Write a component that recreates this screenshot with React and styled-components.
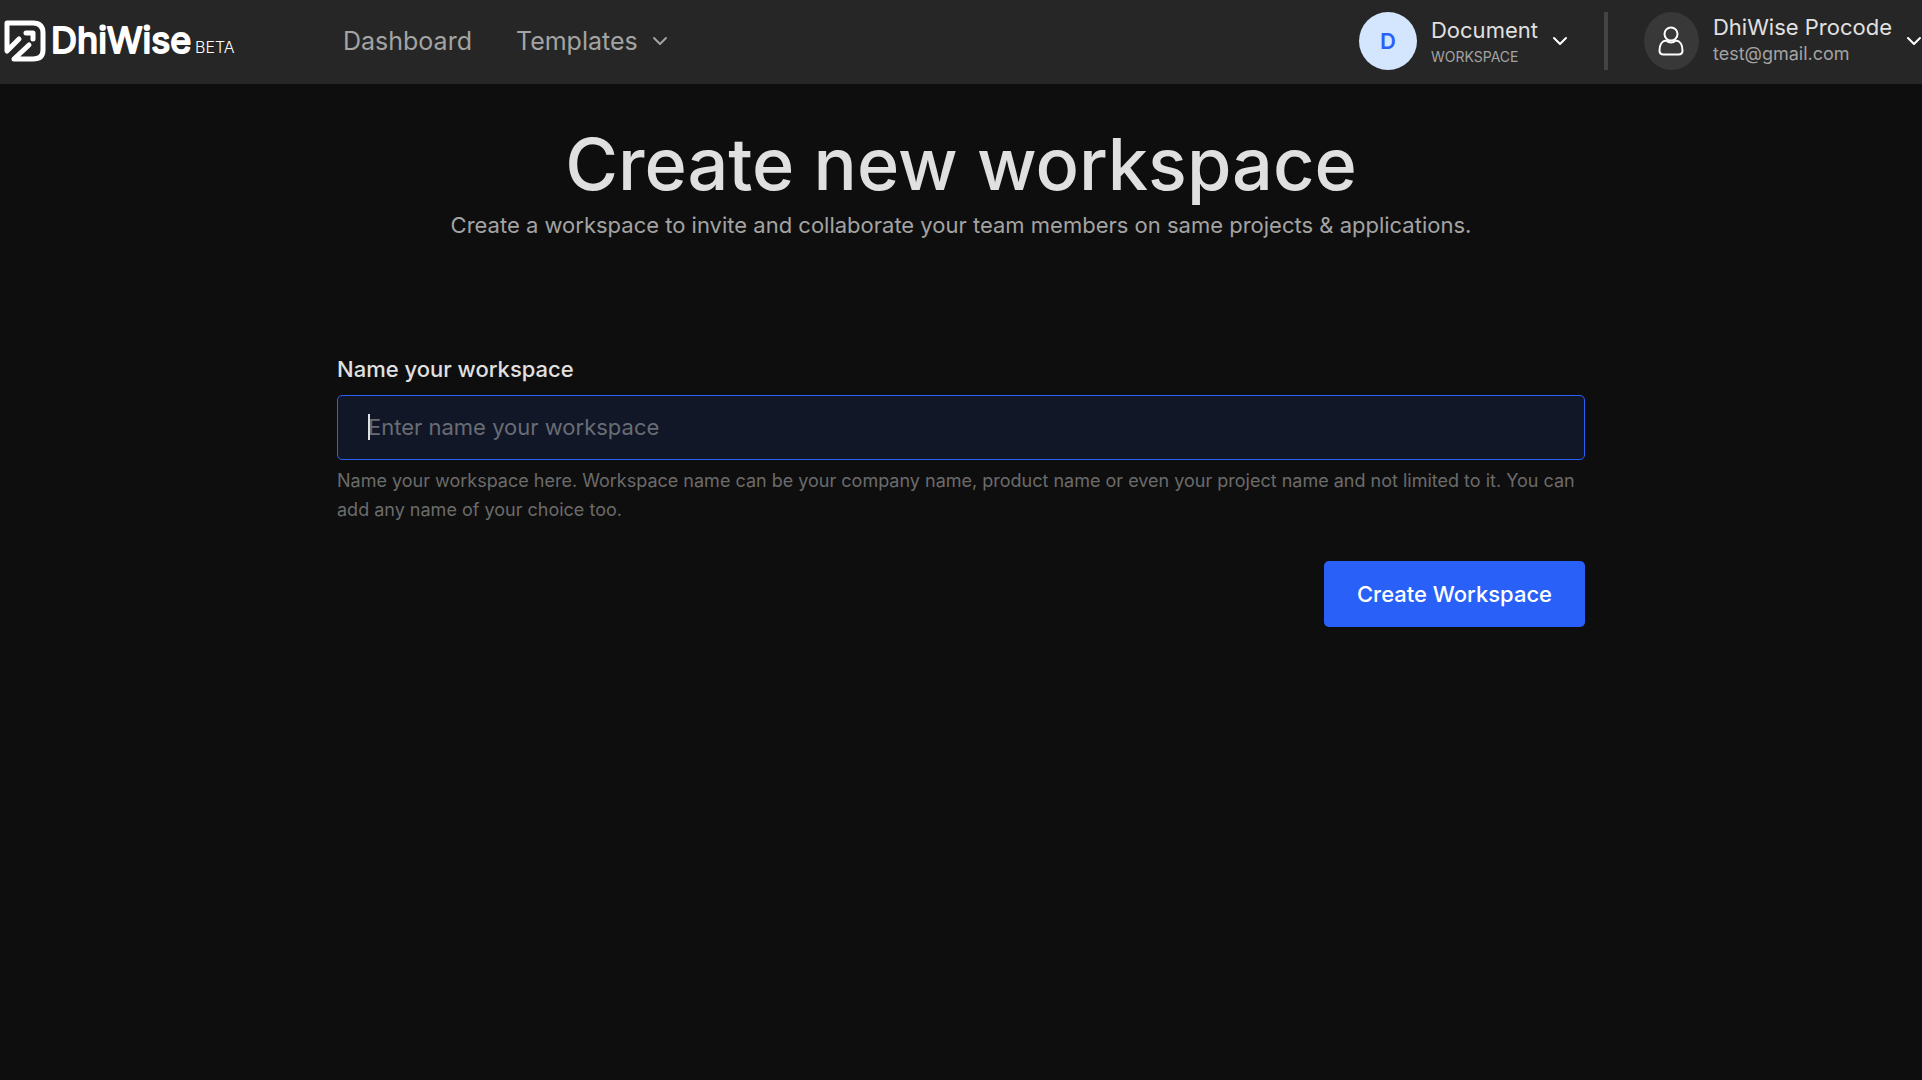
import React from "react";
import styled, { createGlobalStyle, css } from "styled-components";

const GlobalStyle = createGlobalStyle`
  *, *::before, *::after { box-sizing: border-box; }
  body {
    margin: 0;
    background: #0e0e0e;
    color: #e0e0e0;
    font-family: Inter, "Liberation Sans", sans-serif;
  }
  h1, p { margin: 0; }
  button, input { font: inherit; }
`;

const Header = styled.header`
  display: flex;
  align-items: center;
  padding: 12px 0 14px 4px;
  background: #262626;
`;

const Brand = styled.a`
  display: flex;
  flex: none;
  width: 339px;
`;

const Nav = styled.nav`
  display: flex;
  align-items: center;
  gap: 44px;
  flex: 1;
`;

const navItem = css`
  color: #a3a3a3;
  font-size: 25px;
  line-height: 32px;
`;

const NavLink = styled.a`
  ${navItem}
  text-decoration: none;
`;

const PlainButton = styled.button`
  display: flex;
  align-items: center;
  padding: 0;
  border: 0;
  background: none;
  color: #fff;
  text-align: left;
  cursor: pointer;
`;

const NavButton = styled(PlainButton)`
  ${navItem}
  gap: 14px;
`;

const Switcher = styled(PlainButton)`
  gap: 14px;
`;

const Avatar = styled.span`
  display: flex;
  align-items: center;
  justify-content: center;
  flex: none;
  width: ${(p) => p.$width}px;
  height: 58px;
  border-radius: 50%;
  background: ${(p) => p.$background};
  color: #2960f8;
  font-size: 22px;
  font-weight: 600;
`;

const Lines = styled.span`
  display: flex;
  flex-direction: column;
  padding: ${(p) => p.$padding};
`;

const Title = styled.span`
  color: #e0e0e0;
  font-size: 22px;
  line-height: 28px;
`;

const Caption = styled.span`
  color: #a3a3a3;
  font-size: ${(p) => p.$size}px;
  line-height: 26px;
`;

const Divider = styled.span`
  flex: none;
  width: 4px;
  height: 58px;
  margin: 0 36px;
  background: #444;
`;

const Main = styled.main`
  width: 100%;
  max-width: 1248px;
  margin: 0 auto;
  padding-top: 36px;
`;

const Heading = styled.h1`
  color: #e0e0e0;
  font-size: 72px;
  font-weight: 500;
  line-height: 88px;
  text-align: center;
`;

const Lead = styled.p`
  color: #a3a3a3;
  font-size: 22px;
  line-height: 34px;
  text-align: center;
`;

const Form = styled.form`
  display: flex;
  flex-direction: column;
  margin-top: 110px;
`;

const Label = styled.label`
  font-size: 22px;
  font-weight: 500;
  line-height: 34px;
`;

const Field = styled.div`
  position: relative;
  margin-top: 9px;
  font-size: 22px;
`;

const Input = styled.input`
  display: block;
  width: 100%;
  height: 65px;
  padding: 0 30px 2px;
  border: 1px solid #2960f8;
  border-radius: 5px;
  outline: 0;
  background: #111726;
  color: #e0e0e0;
  caret-color: transparent;
  &::placeholder { color: #686c75; opacity: 1; }
`;

const Caret = styled.span`
  position: absolute;
  top: 19px;
  left: 31px;
  width: 2px;
  height: 26px;
  background: #e0e0e0;
`;

const Hint = styled.p`
  margin-top: 6px;
  color: #6b6b6b;
  font-size: 18px;
  line-height: 29px;
`;

const Submit = styled.button`
  align-self: flex-end;
  height: 66px;
  margin-top: 37px;
  padding: 0 33px;
  border: 0;
  border-radius: 5px;
  background: #2960f8;
  color: #fff;
  font-size: 22px;
  font-weight: 500;
  cursor: pointer;
`;

function Chevron() {
  return (
    <svg width="16" height="10" viewBox="0 0 16 10" fill="none" stroke="currentColor" strokeWidth="2" strokeLinecap="round" strokeLinejoin="round" aria-hidden="true">
      <path d="M2 2l6 6 6-6" />
    </svg>
  );
}

function UserIcon() {
  return (
    <svg width="26" height="30" viewBox="0 0 26 30" fill="none" stroke="#fff" strokeWidth="2" strokeLinejoin="round" aria-hidden="true">
      <circle cx="13" cy="8" r="6.5" />
      <path d="M8 14.500C4 15 1.500 19 1.500 24.500C1.500 27.500 3 28.500 5.500 28.500H20.500C23 28.500 24.500 27.500 24.500 24.500C24.500 19 22 15 18 14.500C15 17 11 17 8 14.500Z" />
    </svg>
  );
}

function Logo() {
  return (
    <svg width="234" height="44" viewBox="0 0 234 44" fill="none" role="img" aria-label="DhiWise beta">
      <g stroke="#fff" strokeWidth="5" strokeLinecap="round" strokeLinejoin="round">
        <path d="M15 20L3 32V4H29Q39 4 39 14V31Q39 40 29 40H10L25 26" />
        <path d="M22 14H29V20" />
      </g>
      <text x="47" y="34" fill="#fff" stroke="#fff" strokeWidth="2" strokeLinejoin="round" fontFamily="Inter, sans-serif" fontSize="36" fontWeight="400">DhiWise</text>
      <text x="191" y="34" fill="#fff" fontFamily="Inter, sans-serif" fontSize="16" fontWeight="300">BETA</text>
    </svg>
  );
}

export default function App() {
  return (
    <>
      <GlobalStyle />
      <Header>
        <Brand href="#"><Logo /></Brand>
        <Nav>
          <NavLink href="#dashboard">Dashboard</NavLink>
          <NavButton type="button">Templates <Chevron /></NavButton>
        </Nav>
        <Switcher type="button">
          <Avatar $width={58} $background="#d3e6fe">D</Avatar>
          <Lines $padding="4px 0 0">
            <Title>Document</Title>
            <Caption $size={14}>WORKSPACE</Caption>
          </Lines>
          <Chevron />
        </Switcher>
        <Divider />
        <Switcher type="button">
          <Avatar $width={55} $background="#383838"><UserIcon /></Avatar>
          <Lines $padding="0 0 2px">
            <Title>DhiWise Procode</Title>
            <Caption $size={18}>test@gmail.com</Caption>
          </Lines>
          <Chevron />
        </Switcher>
      </Header>
      <Main>
        <Heading>Create new workspace</Heading>
        <Lead>Create a workspace to invite and collaborate your team members on same projects &amp; applications.</Lead>
        <Form onSubmit={(event) => event.preventDefault()}>
          <Label htmlFor="workspace-name">Name your workspace</Label>
          <Field>
            <Input id="workspace-name" type="text" placeholder="Enter name your workspace" aria-describedby="workspace-hint" />
            <Caret />
          </Field>
          <Hint id="workspace-hint">
            Name your workspace here. Workspace name can be your company name, product name or even your project name and not limited to it. You can add any name of your choice too.
          </Hint>
          <Submit type="submit">Create Workspace</Submit>
        </Form>
      </Main>
    </>
  );
}
